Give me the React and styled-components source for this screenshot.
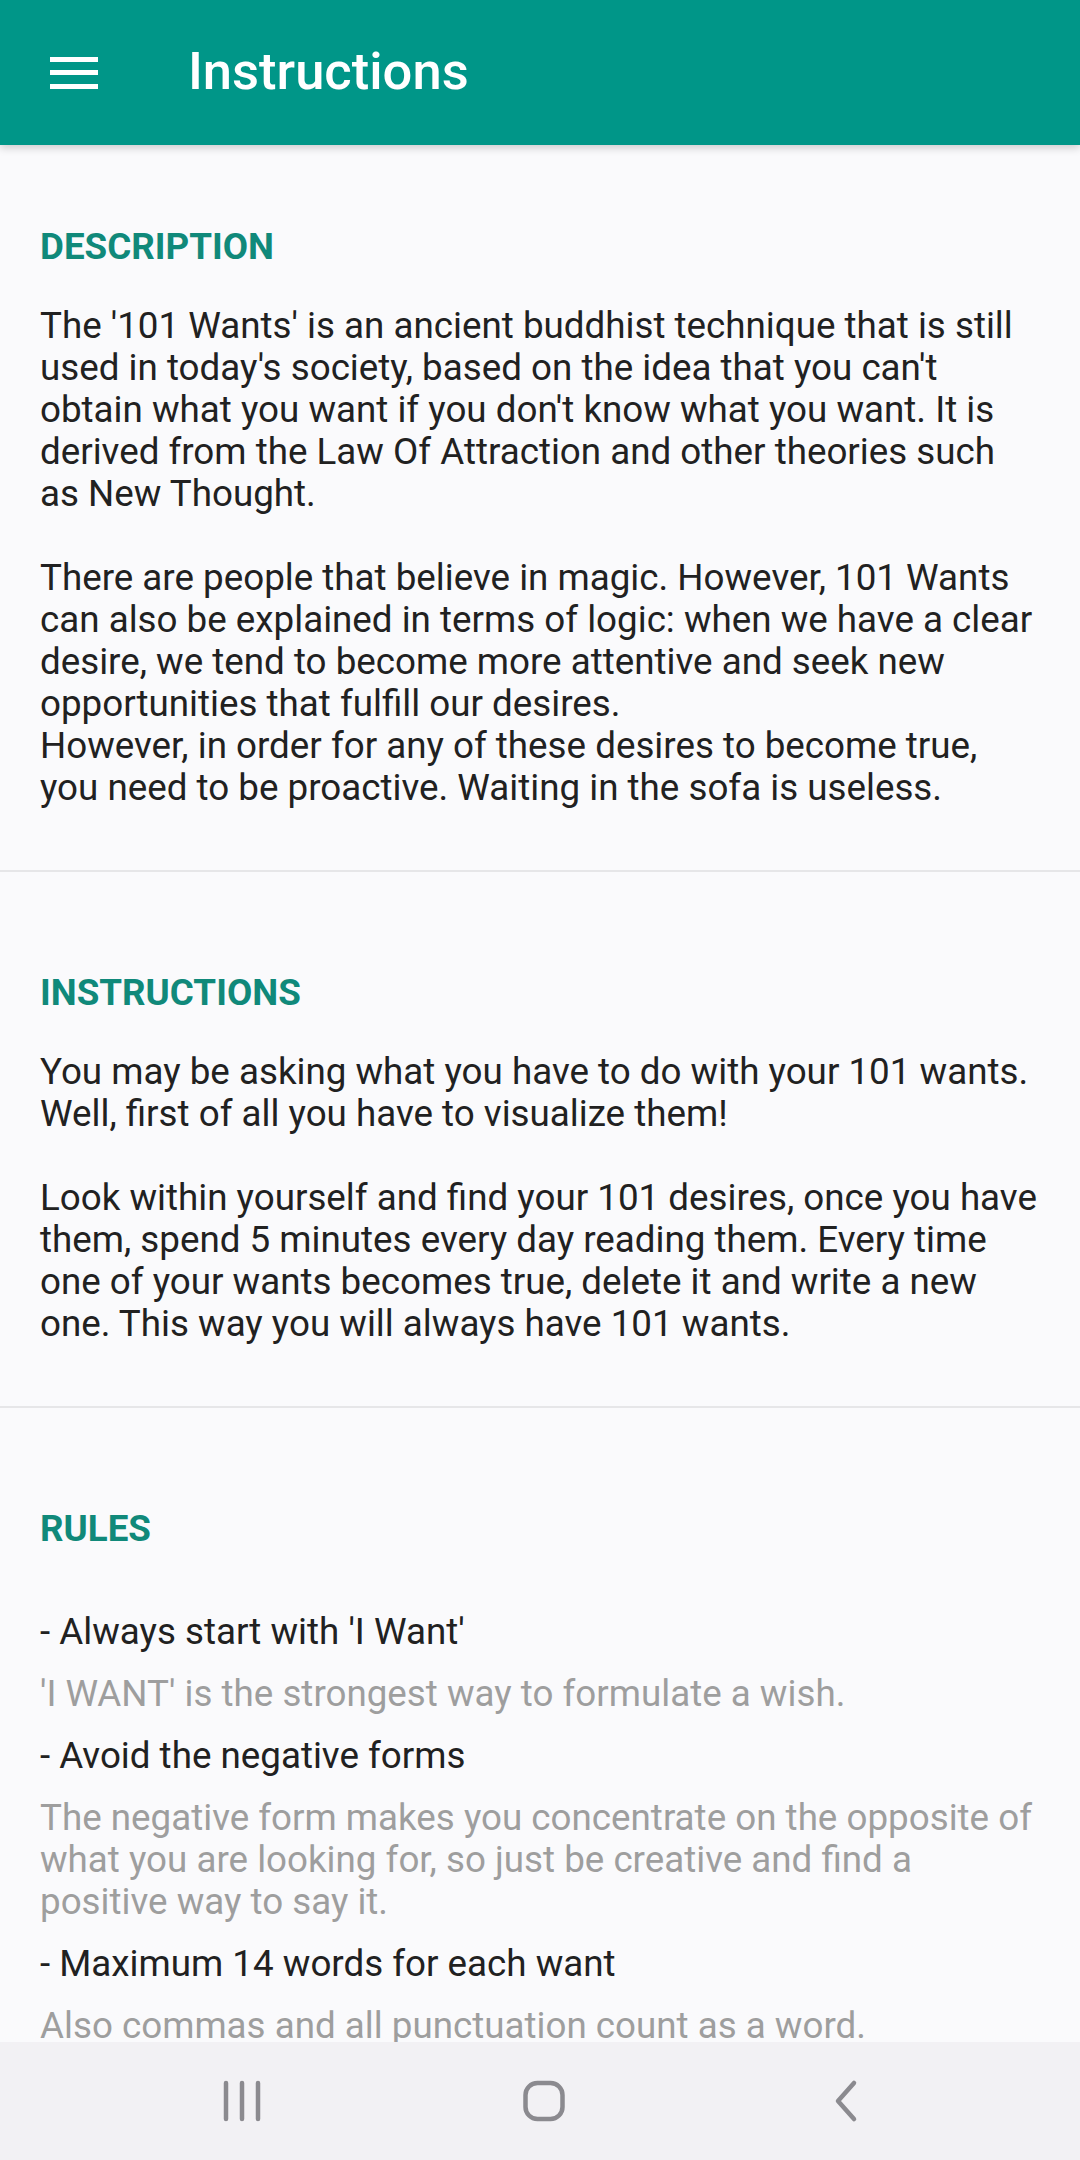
import React from 'react';
import styled, { createGlobalStyle } from 'styled-components';

const GlobalStyle = createGlobalStyle`
  html, body {
    margin: 0;
    padding: 0;
    background: #fafafc;
  }
  body {
    font-family: Roboto, "Noto Sans", "Liberation Sans", sans-serif;
    -webkit-font-smoothing: antialiased;
  }
`;

const Screen = styled.div`
  width: 1080px;
  height: 2160px;
  display: flex;
  flex-direction: column;
  background: #fafafc;
  overflow: hidden;
`;

const Toolbar = styled.header`
  height: 145px;
  flex-shrink: 0;
  background: #009688;
  display: flex;
  align-items: center;
  padding-left: 50px;
  box-shadow: 0 3px 8px rgba(0, 0, 0, 0.18);
  position: relative;
  z-index: 2;
`;

const MenuButton = styled.div`
  width: 48px;
  height: 32px;
  display: flex;
  flex-direction: column;
  justify-content: space-between;
  span {
    display: block;
    height: 5px;
    background: #ffffff;
  }
`;

const Title = styled.h1`
  margin: 0 0 0 90px;
  color: #ffffff;
  font-size: 52.5px;
  font-weight: 500;
  line-height: 1;
  padding-bottom: 2px;
`;

const Content = styled.main`
  flex: 1;
  overflow: hidden;
`;

const Section = styled.section`
  padding: ${p => (p.first ? '80px' : '99px')} 40px 61px;
  border-bottom: ${p => (p.last ? 'none' : '2px solid #e6e6e8')};
`;

const SectionTitle = styled.h2`
  margin: 0 0 ${p => p.gap || 37}px;
  color: #10897a;
  font-size: 36.75px;
  font-weight: 700;
  line-height: 43px;
`;

const Body = styled.p`
  margin: 0;
  color: #212121;
  font-size: 36.75px;
  line-height: 42px;
  white-space: pre-line;
`;

const RuleList = styled.div`
  display: flex;
  flex-direction: column;
  gap: 20px;
`;

const Rule = styled.div`
  display: flex;
  flex-direction: column;
  gap: 20px;
`;

const RuleTitle = styled.div`
  color: #212121;
  font-size: 36.75px;
  line-height: 42px;
`;

const RuleText = styled.div`
  color: #9e9e9e;
  font-size: 36.75px;
  line-height: 42px;
`;

const NavBar = styled.nav`
  height: 118px;
  flex-shrink: 0;
  background: #f2f1f4;
  display: grid;
  grid-template-columns: repeat(3, 302px);
  align-items: center;
  justify-items: center;
  padding: 0 0 0 91px;
  position: relative;
  z-index: 2;
`;

const NavIcon = styled.svg`
  width: 48px;
  height: 48px;
  stroke: #8b8a8f;
  fill: none;
  stroke-width: 4.5;
  stroke-linecap: round;
  stroke-linejoin: round;
`;

const rules = [
  {
    title: "- Always start with 'I Want'",
    text: "'I WANT' is the strongest way to formulate a wish.",
  },
  {
    title: '- Avoid the negative forms',
    text: 'The negative form makes you concentrate on the opposite of what you are looking for, so just be creative and find a positive way to say it.',
  },
  {
    title: '- Maximum 14 words for each want',
    text: 'Also commas and all punctuation count as a word.',
  },
];

export default function App() {
  return (
    <>
      <GlobalStyle />
      <Screen>
        <Toolbar>
          <MenuButton>
            <span />
            <span />
            <span />
          </MenuButton>
          <Title>Instructions</Title>
        </Toolbar>

        <Content>
          <Section first>
            <SectionTitle>DESCRIPTION</SectionTitle>
            <Body>
              {`The '101 Wants' is an ancient buddhist technique that is still used in today's society, based on the idea that you can't obtain what you want if you don't know what you want. It is derived from the Law Of Attraction and other theories such as New Thought.

There are people that believe in magic. However, 101 Wants can also be explained in terms of logic: when we have a clear desire, we tend to become more attentive and seek new opportunities that fulfill our desires.
However, in order for any of these desires to become true, you need to be proactive. Waiting in the sofa is useless.`}
            </Body>
          </Section>

          <Section>
            <SectionTitle>INSTRUCTIONS</SectionTitle>
            <Body>
              {`You may be asking what you have to do with your 101 wants. Well, first of all you have to visualize them!

Look within yourself and find your 101 desires, once you have them, spend 5 minutes every day reading them. Every time one of your wants becomes true, delete it and write a new one. This way you will always have 101 wants.`}
            </Body>
          </Section>

          <Section last>
            <SectionTitle gap={61}>RULES</SectionTitle>
            <RuleList>
              {rules.map(r => (
                <Rule key={r.title}>
                  <RuleTitle>{r.title}</RuleTitle>
                  <RuleText>{r.text}</RuleText>
                </Rule>
              ))}
            </RuleList>
          </Section>
        </Content>

        <NavBar>
          <NavIcon viewBox="0 0 48 48">
            <path d="M8 6v36M24 6v36M40 6v36" />
          </NavIcon>
          <NavIcon viewBox="0 0 48 48">
            <rect x="5.5" y="6" width="37" height="36" rx="12" />
          </NavIcon>
          <NavIcon viewBox="0 0 48 48">
            <path d="M32 6L16 24l16 18" />
          </NavIcon>
        </NavBar>
      </Screen>
    </>
  );
}
